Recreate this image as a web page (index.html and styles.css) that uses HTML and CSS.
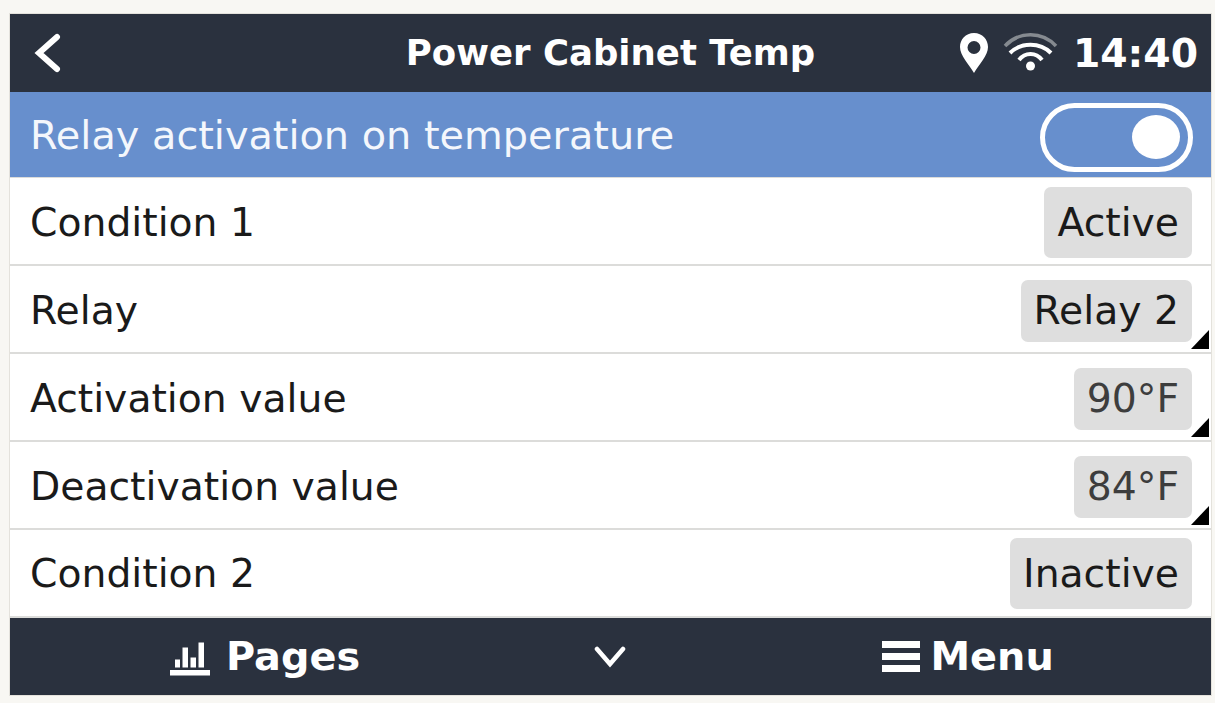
FILE: index.html
```html
<!DOCTYPE html>
<html>
    <head>
        <title>Power Cabinet Temp</title>
        <meta charset="UTF-8">
        <meta name="viewport" content="width=device-width, initial-scale=1.0">
        <link rel="stylesheet" href="styles.css">
    </head>
    <body>
        <div class="screen">
            <header class="top-bar">
                <svg class="back-icon" width="28" height="40" viewBox="0 0 28 40">
                    <path d="M24 4 L6 20 L24 36" fill="none" stroke="#fff" stroke-width="6" stroke-linecap="round" stroke-linejoin="miter"/>
                </svg>
                <h1 class="title">Power Cabinet Temp</h1>
                <div class="status">
                    <svg class="pin-icon" width="30" height="42" viewBox="0 0 30 42">
                        <path fill-rule="evenodd" fill="#fff" d="M15 1 C6.500 1 1 7.500 1 15 C1 24 10 32 15 41 C20 32 29 24 29 15 C29 7.500 23.500 1 15 1 Z M15 9 A6.500 6.500 0 1 1 15 22 A6.500 6.500 0 1 1 15 9 Z"/>
                    </svg>
                    <svg class="wifi-icon" width="56" height="40" viewBox="0 0 56 40">
                        <path d="M2 13 C16 -2 39 -2 53 13" fill="none" stroke="#858a90" stroke-width="3.500"/>
                        <path d="M7 20 C18 9 37 9 48 20" fill="none" stroke="#fff" stroke-width="4"/>
                        <path d="M16 27 C22 19 33 19 39 27" fill="none" stroke="#fff" stroke-width="4"/>
                        <circle cx="27.500" cy="33" r="4.500" fill="#fff"/>
                    </svg>
                    <span class="clock">14:40</span>
                </div>
            </header>

            <div class="list-head">
                <span>Relay activation on temperature</span>
                <div class="switch"><div class="knob"></div></div>
            </div>

            <div class="rows">
                <div class="row">
                    <span>Condition 1</span>
                    <span class="value tall">Active</span>
                </div>
                <div class="row editable">
                    <span>Relay</span>
                    <span class="value">Relay 2</span>
                </div>
                <div class="row editable">
                    <span>Activation value</span>
                    <span class="value dim">90°F</span>
                </div>
                <div class="row editable">
                    <span>Deactivation value</span>
                    <span class="value dim">84°F</span>
                </div>
                <div class="row">
                    <span>Condition 2</span>
                    <span class="value tall">Inactive</span>
                </div>
            </div>

            <footer class="bottom-bar">
                <div class="nav-item pages">
                    <svg width="40" height="40" viewBox="0 0 40 40">
                        <path fill="#fff" d="M0 33 H40 V38.500 H0 Z M5 22.500 H10 V30.500 H5 Z M12.500 10.500 H18 V30.500 H12.500 Z M20.500 20.500 H26 V30.500 H20.500 Z M28.500 5.500 H34 V30.500 H28.500 Z"/>
                    </svg>
                    <span>Pages</span>
                </div>
                <svg class="chevron" width="34" height="22" viewBox="0 0 34 22">
                    <path d="M3 3 L16 18 L29 3" fill="none" stroke="#fff" stroke-width="4.500" stroke-linecap="round"/>
                </svg>
                <div class="nav-item menu">
                    <svg width="38" height="31" viewBox="0 0 38 31">
                        <path fill="#fff" d="M0 0 H38 V7 H0 Z M0 12 H38 V19 H0 Z M0 24 H38 V31 H0 Z"/>
                    </svg>
                    <span>Menu</span>
                </div>
            </footer>
        </div>
    </body>
</html>
```

FILE: styles.css
```css
:root {
    --dark-color: #2a313e;
    --blue-color: #678fcd;
    --line-color: #dcdcda;
    --button-color: #dedede;
    --text-color: #1a1a1a;
}

* {
    box-sizing: border-box;
    margin: 0;
    padding: 0;
    font-family: 'DejaVu Sans', sans-serif;
}

html, body {
    height: 100%;
}

body {
    background: #f8f7f3;
    padding: 14px 4px 8px 10px;
    overflow: hidden;
}

.screen {
    display: flex;
    flex-direction: column;
    width: 1201px;
    height: 681px;
    background: #fff;
    box-shadow: 0 0 0 1px #e4e2dc;
}

.top-bar {
    display: grid;
    grid-template-columns: 1fr auto 1fr;
    align-items: center;
    height: 78px;
    padding: 0 13px;
    background: var(--dark-color);
    color: #fff;
}

.back-icon {
    margin-left: 10px;
}

.title {
    font-size: 35.500px;
    font-weight: 700;
    white-space: nowrap;
    margin-top: -2px;
}

.status {
    display: flex;
    align-items: center;
    justify-content: flex-end;
    gap: 14px;
}

.clock {
    font-size: 39.300px;
    font-weight: 700;
}

.list-head {
    display: flex;
    align-items: center;
    justify-content: space-between;
    height: 85px;
    padding: 0 18px 0 20px;
    background: var(--blue-color);
    color: #f4f7fc;
    font-size: 39.800px;
}

.switch {
    display: flex;
    align-items: center;
    justify-content: flex-end;
    width: 153px;
    height: 69px;
    margin-top: 5px;
    padding-right: 8px;
    border: 5px solid #fff;
    border-radius: 35px;
}

.knob {
    width: 48px;
    height: 44px;
    background: #fff;
    border-radius: 50%;
}

.rows {
    display: flex;
    flex: 1;
    flex-direction: column;
    border-top: 1px solid var(--line-color);
}

.row {
    position: relative;
    display: flex;
    flex: 1;
    align-items: center;
    justify-content: space-between;
    padding: 3px 19px 0 20px;
    border-bottom: 2px solid var(--line-color);
    color: var(--text-color);
    font-size: 39.300px;
}

.row:last-child span {
    margin-bottom: 3px;
}

.value {
    display: flex;
    align-items: center;
    height: 62px;
    padding: 0 13px;
    background: var(--button-color);
    border-radius: 7px;
}

.value.tall {
    height: 71px;
}

.value.dim {
    color: #3d3d3d;
}

.editable::after {
    content: '';
    position: absolute;
    right: 2px;
    bottom: 3px;
    border-style: solid;
    border-width: 0 0 19px 18px;
    border-color: transparent transparent #000 transparent;
}

.bottom-bar {
    display: grid;
    grid-template-columns: 1fr auto 1fr;
    align-items: center;
    height: 77px;
    background: var(--dark-color);
    color: #fff;
}

.nav-item {
    display: flex;
    align-items: center;
    gap: 16px;
    font-size: 39.800px;
    font-weight: 700;
}

.nav-item span {
    margin-top: -2px;
}

.pages {
    padding-left: 160px;
}

.menu {
    gap: 11px;
    padding-left: 254px;
}
```
